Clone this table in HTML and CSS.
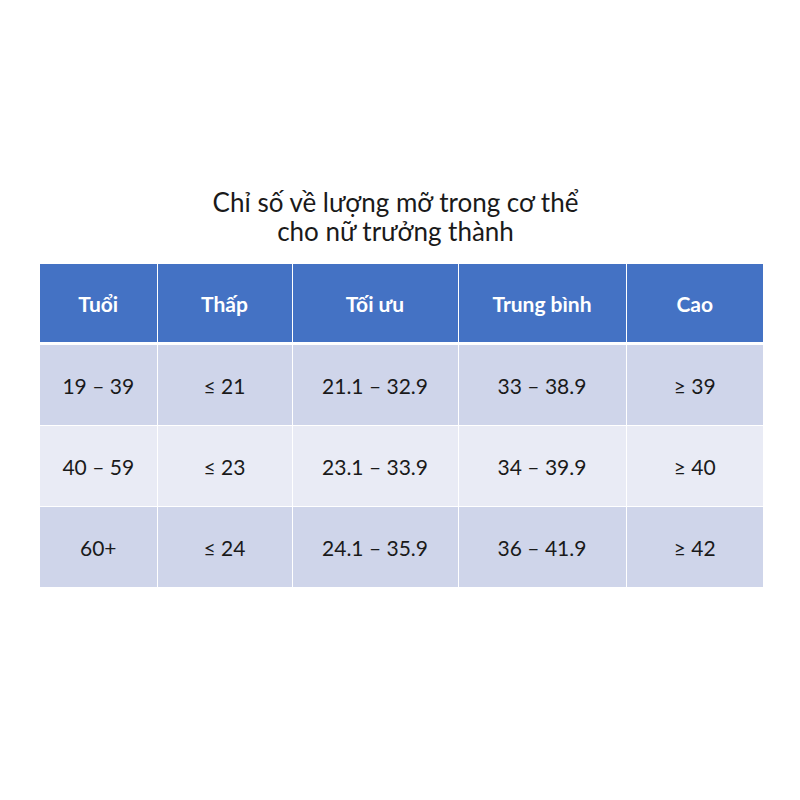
FILE: index.html
```html
<!DOCTYPE html>
<html lang="vi">
<head>
<meta charset="utf-8">
<link rel="stylesheet" href="styles.css">
</head>
<body>
<div class="page">
  <h1 class="title">Chỉ số về lượng mỡ trong cơ thể<br>cho nữ trưởng thành</h1>
  <table class="data">
    <colgroup>
      <col class="c1"><col class="c2"><col class="c3"><col class="c4"><col class="c5">
    </colgroup>
    <thead>
      <tr><th>Tuổi</th><th>Thấp</th><th>Tối ưu</th><th>Trung bình</th><th>Cao</th></tr>
    </thead>
    <tbody>
      <tr class="odd"><td>19 – 39</td><td>≤ 21</td><td>21.1 – 32.9</td><td>33 – 38.9</td><td>≥ 39</td></tr>
      <tr class="even"><td>40 – 59</td><td>≤ 23</td><td>23.1 – 33.9</td><td>34 – 39.9</td><td>≥ 40</td></tr>
      <tr class="odd"><td>60+</td><td>≤ 24</td><td>24.1 – 35.9</td><td>36 – 41.9</td><td>≥ 42</td></tr>
    </tbody>
  </table>
</div>
</body>
</html>
```

FILE: styles.css
```css
html, body {
  margin: 0;
  padding: 0;
  background: #ffffff;
}
.page {
  width: 800px;
  height: 800px;
  padding-top: 188px;
  box-sizing: border-box;
  font-family: "Lato", "Open Sans", "Liberation Sans", sans-serif;
  color: #1a1a1a;
}
.title {
  margin: 0 0 18px 0;
  padding-right: 9px;
  text-align: center;
  font-weight: 400;
  font-size: 26px;
  line-height: 29px;
  color: #1a1a1a;
}
.data {
  margin: 0 0 0 40px;
  width: 723px;
  border-collapse: collapse;
  table-layout: fixed;
}
.c1 { width: 117px; }
.c2 { width: 135px; }
.c3 { width: 166px; }
.c4 { width: 168px; }
.c5 { width: 137px; }
.data th, .data td {
  border-left: 1px solid #ffffff;
  border-right: 1px solid #ffffff;
  text-align: center;
  padding: 0;
  font-size: 21px;
}
.data th:first-child, .data td:first-child { border-left: none; }
.data th:last-child, .data td:last-child { border-right: none; }
.data th {
  background: #4472c4;
  color: #ffffff;
  font-weight: 700;
  height: 78px;
  border-bottom: 3px solid #ffffff;
}
.data td {
  height: 80px;
  color: #1a1a1a;
  border-top: 1px solid #ffffff;
}
.data tr.odd td { background: #cfd5ea; }
.data tr.even td { background: #e9ebf5; }
```
